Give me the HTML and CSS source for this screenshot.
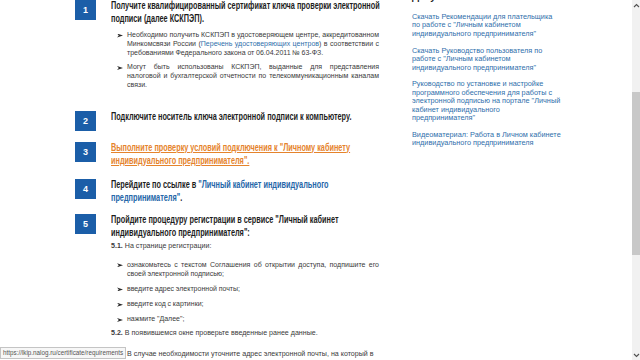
FILE: index.html
```html
<!DOCTYPE html>
<html lang="ru">
<head>
<meta charset="utf-8">
<title>Личный кабинет индивидуального предпринимателя</title>
<link rel="stylesheet" href="styles.css">
</head>
<body>
<div class="window">
  <div class="viewport">
    <div class="page">
      <main class="steps">
        <section class="step step-1">
          <div class="num">1</div>
          <div class="step-body">
            <h2 class="title">Получите квалифицированный сертификат ключа проверки электронной подписи (далее КСКПЭП).</h2>
            <ul class="bullets bullets-first">
              <li><span class="ln">Необходимо получить КСКПЭП в удостоверяющем центре, аккредитованном</span><span class="ln">Минкомсвязи России (<a class="inline-link" href="#">Перечень удостоверяющих центров</a>) в соответствии с</span><span class="ln-last">требованиями Федерального закона от 06.04.2011 № 63-ФЗ.</span></li>
              <li><span class="ln">Могут быть использованы КСКПЭП, выданные для представления</span><span class="ln">налоговой и бухгалтерской отчетности по телекоммуникационным каналам</span><span class="ln-last">связи.</span></li>
            </ul>
          </div>
        </section>
        <section class="step step-2">
          <div class="num">2</div>
          <div class="step-body">
            <h2 class="title">Подключите носитель ключа электронной подписи к компьютеру.</h2>
          </div>
        </section>
        <section class="step step-3">
          <div class="num">3</div>
          <div class="step-body">
            <h2 class="title"><a class="orange-link" href="#">Выполните проверку условий подключения к "Личному кабинету индивидуального предпринимателя".</a></h2>
          </div>
        </section>
        <section class="step step-4">
          <div class="num">4</div>
          <div class="step-body">
            <h2 class="title">Перейдите по ссылке в <a class="blue-link" href="#">"Личный кабинет индивидуального предпринимателя"</a>.</h2>
          </div>
        </section>
        <section class="step step-5">
          <div class="num">5</div>
          <div class="step-body">
            <h2 class="title">Пройдите процедуру регистрации в сервисе "Личный кабинет индивидуального предпринимателя":</h2>
            <p class="sub sub-first"><b>5.1.</b> На странице регистрации:</p>
            <ul class="bullets bullets-reg">
              <li><span class="ln">ознакомьтесь с текстом Соглашения об открытии доступа, подпишите его</span><span class="ln-last">своей электронной подписью;</span></li>
              <li>введите адрес электронной почты;</li>
              <li>введите код с картинки;</li>
              <li>нажмите "Далее";</li>
            </ul>
            <p class="sub sub-second"><b>5.2.</b> В появившемся окне проверьте введенные ранее данные.</p>
            <p class="note">В случае необходимости уточните адрес электронной почты, на который в</p>
          </div>
        </section>
      </main>
      <aside class="docs">
        <h3 class="docs-title">Документы</h3>
        <a class="doc-link" href="#">Скачать Рекомендации для плательщика по работе с "Личным кабинетом индивидуального предпринимателя"</a>
        <a class="doc-link" href="#">Скачать Руководство пользователя по работе с "Личным кабинетом индивидуального предпринимателя"</a>
        <a class="doc-link" href="#">Руководство по установке и настройке программного обеспечения для работы с электронной подписью на портале "Личный кабинет индивидуального предпринимателя"</a>
        <a class="doc-link" href="#">Видеоматериал: Работа в Личном кабинете индивидуального предпринимателя</a>
      </aside>
    </div>
  </div>
  <div class="scrollbar">
    <div class="sb-arrow">
      <svg width="7" height="5" viewBox="0 0 7 5"><path d="M1 4 L3.5 1.5 L6 4" fill="none" stroke="#505050" stroke-width="1.1"/></svg>
    </div>
    <div class="sb-track">
      <div class="sb-gap-top"></div>
      <div class="sb-thumb"></div>
    </div>
    <div class="sb-arrow">
      <svg width="7" height="5" viewBox="0 0 7 5"><path d="M1 1 L3.5 3.5 L6 1" fill="none" stroke="#505050" stroke-width="1.1"/></svg>
    </div>
  </div>
</div>
<div class="status">https://lkip.nalog.ru/certificate/requirements</div>
</body>
</html>
```

FILE: styles.css
```css
html, body {
  margin: 0;
  padding: 0;
  background: #ffffff;
}

body {
  font-family: "Liberation Sans", Arial, sans-serif;
  color: #3a3a3a;
  overflow: hidden;
}

.window {
  display: flex;
  width: 640px;
  height: 360px;
}

.viewport {
  flex: 1;
  overflow: hidden;
  background: #ffffff;
}

.page {
  display: flex;
  padding-left: 75px;
  gap: 30px;
}

.steps {
  width: 307px;
  display: flex;
  flex-direction: column;
}

.step {
  display: flex;
  gap: 15px;
}

.step-2 { margin-top: 21px; }
.step-3 { margin-top: 11.5px; }
.step-4 { margin-top: 12px; }
.step-5 { margin-top: 10px; }

.num {
  flex: none;
  width: 21px;
  height: 20px;
  background: #1b5ea8;
  color: #ffffff;
  font-weight: bold;
  font-size: 9px;
  display: flex;
  align-items: center;
  justify-content: center;
}

.step-body {
  width: 271px;
}

/* condensed bold heading: Liberation Sans Bold narrowed horizontally */
.title {
  margin: 0;
  width: 372px;
  transform: scaleX(0.73);
  transform-origin: left top;
  font-family: "Liberation Sans", Arial, sans-serif;
  font-weight: bold;
  font-size: 10px;
  line-height: 12.5px;
  color: #1d1d1d;
}

.orange-link {
  color: #e5832c;
  text-decoration: underline;
}

.blue-link {
  color: #2466a8;
  text-decoration: none;
}

.bullets {
  list-style: none;
  margin: 0;
  padding: 0 0 0 16px;
  font-size: 7px;
  line-height: 8.8px;
  word-spacing: -0.2px;
}

.bullets li {
  position: relative;
}

.bullets li + li {
  margin-top: 6px;
}

.bullets-reg li + li {
  margin-top: 6.5px;
}

.ln {
  display: block;
  text-align: justify;
  text-align-last: justify;
}

.ln-last {
  display: block;
}

.bullets li::before {
  content: "";
  position: absolute;
  left: -10px;
  top: 2.5px;
  width: 6px;
  height: 4px;
  background: #2a2a2a;
  clip-path: polygon(0 0, 100% 50%, 0 100%, 30% 50%);
}

.bullets-first {
  margin-top: 6px;
  width: 252px;
}

.bullets-reg {
  margin-top: 10px;
  width: 252px;
}

.inline-link {
  color: #2f6fab;
  text-decoration: none;
}

.sub {
  margin: 0;
  font-size: 7.1px;
  line-height: 9px;
}

.sub-first {
  margin-top: 2.5px;
}

.sub-second {
  margin-top: 5px;
}

.note {
  margin: 12px 0 0 16px;
  font-size: 7.1px;
  line-height: 9px;
}

.docs {
  width: 150px;
  display: flex;
  flex-direction: column;
  gap: 8.5px;
}

.docs-title {
  margin: -9px 0 1.5px 0;
  font-size: 10px;
  line-height: 12px;
  font-weight: bold;
  color: #1d1d1d;
}

.doc-link {
  font-size: 7.3px;
  line-height: 8.4px;
  color: #2f6fab;
  text-decoration: none;
}

.scrollbar {
  width: 8px;
  flex: none;
  display: flex;
  flex-direction: column;
  background: #f1f1f1;
}

.sb-arrow {
  height: 10px;
  display: flex;
  align-items: center;
  justify-content: center;
}

.sb-track {
  flex: 1;
  display: flex;
  flex-direction: column;
  align-items: center;
}

.sb-gap-top {
  height: 82px;
}

.sb-thumb {
  width: 8px;
  height: 163px;
  background: #c8c8c8;
}

.status {
  position: fixed;
  left: 0;
  bottom: 1px;
  padding: 1px 2px;
  font-size: 6.3px;
  line-height: 8px;
  color: #555555;
  background: #f7f7f7;
  border: 1px solid #c4c4c4;
}
```
